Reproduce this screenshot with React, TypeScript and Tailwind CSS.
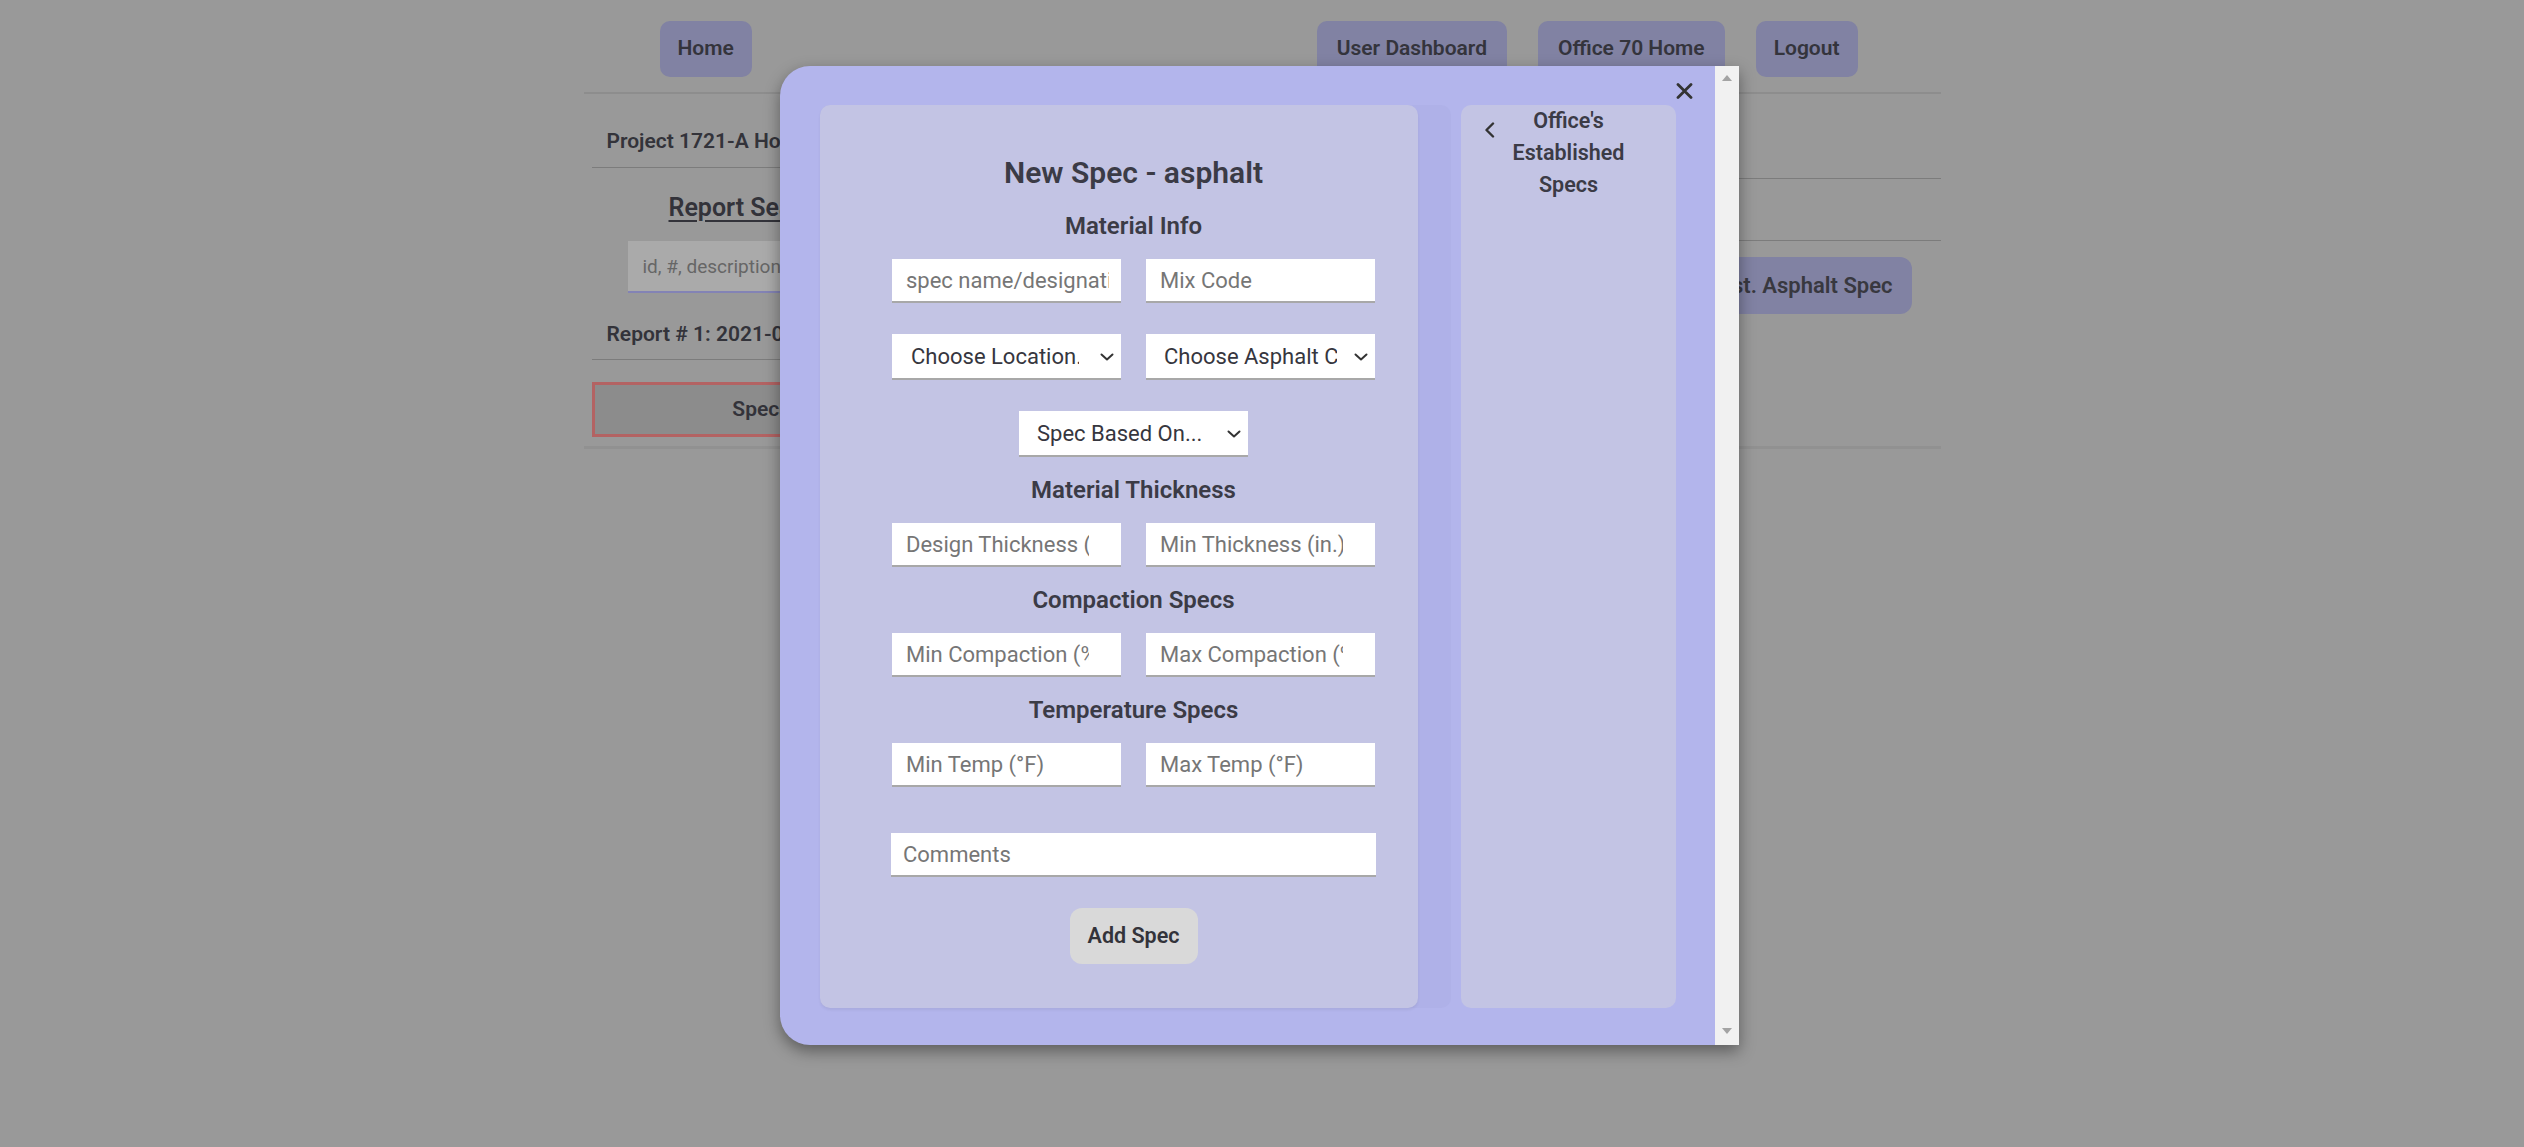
import React from "react";

const font = "font-['Roboto','Liberation_Sans',sans-serif]";

function NavButton({ label, wide = false }: { label: string; wide?: boolean }) {
  return (
    <button className={`h-[56px] ${wide ? "px-[20px]" : "px-[18px]"} rounded-[10px] bg-[#8182a3] text-[21px] font-semibold text-[#34343c]`}>
      {label}
    </button>
  );
}

function Chevron() {
  return (
    <svg width="14" height="8" viewBox="0 0 14 8" fill="none">
      <polyline points="1.5,1.5 7,6.5 12.5,1.5" stroke="#333" strokeWidth="2" strokeLinecap="round" strokeLinejoin="round" />
    </svg>
  );
}

function Field({ placeholder, numeric = false }: { placeholder: string; numeric?: boolean }) {
  return (
    <input
      placeholder={placeholder}
      className={`w-[229px] h-[44px] bg-white border-b-2 border-[#a8a8a8] pl-[14px] ${numeric ? "pr-[32px]" : "pr-[12px]"} text-[22px] text-[#333] placeholder:text-[#767676] outline-none`}
    />
  );
}

function Select({ label, narrow = false }: { label: string; narrow?: boolean }) {
  return (
    <div className="relative w-[229px] h-[46px]">
      <select
        className={`appearance-none w-full h-full bg-white border-b-2 border-[#a8a8a8] ${narrow ? "pl-[18px] pr-[38px]" : "pl-[19px] pr-[42px]"} text-[22px] text-[#36363e] outline-none`}
        defaultValue="x"
      >
        <option value="x">{label}</option>
      </select>
      <span className="pointer-events-none absolute right-[7px] top-[19px]">
        <Chevron />
      </span>
    </div>
  );
}

function Heading({ children }: { children: React.ReactNode }) {
  return <div className="h-[30px] leading-[30px] my-[18px] text-[24px] font-semibold text-[#3b3b46]">{children}</div>;
}

export default function App() {
  return (
    <div className={`relative min-h-screen w-full bg-[#999999] ${font}`}>
      {/* Background page */}
      <div className="mx-auto w-[1357px] h-[1147px]">
        <nav className="flex items-center justify-between pl-[76px] pr-[83px] pt-[21px] pb-[15px] border-b-[2px] border-[#8d8d8d]">
          <NavButton label="Home" />
          <div className="flex gap-[31px]">
            <NavButton label="User Dashboard" wide />
            <NavButton label="Office 70 Home" wide />
            <NavButton label="Logout" />
          </div>
        </nav>

        <div className="flex border-b-[3px] border-[#919191]">
          <div className="w-[408px] ml-[8px] pb-[9px]">
            <div className="pt-[33px] pb-[12px] pl-[15px] border-b border-[#7c7c7c] text-[21px] leading-[28px] font-semibold text-[#33333a] whitespace-nowrap">
              Project 1721-A Holiday Inn Express
            </div>
            <div className="mt-[24px] pl-[77px] h-[32px] leading-[32px] text-[25px] font-semibold text-[#33333a] underline underline-offset-[4px] whitespace-nowrap">
              Report Search Filters
            </div>
            <input
              placeholder="id, #, description, date"
              className="mt-[17px] ml-[36px] w-[336px] h-[52px] bg-[#aaaaaa] border-b-2 border-[#8383b5] px-[15px] text-[19px] placeholder:text-[#666666] outline-none"
            />
            <div className="mt-[27px] pb-[11px] pl-[15px] border-b border-[#7c7c7c] text-[21px] leading-[28px] font-semibold text-[#33333a] whitespace-nowrap">
              Report # 1: 2021-06-14
            </div>
            <button className="mt-[22px] w-full h-[55px] border-[3px] border-[#b36363] bg-[#8c8c8c] text-[21px] font-semibold text-[#33333a]">
              Specs Report
            </button>
          </div>
          <div className="flex-1 ml-[40px] flex flex-col">
            <div className="h-[85px] border-b border-[#7c7c7c]" />
            <div className="h-[62px] border-b border-[#7c7c7c]" />
            <button className="mt-[16px] self-end mr-[29px] h-[57px] px-[19px] rounded-[12px] bg-[#8182a3] text-[22px] font-semibold text-[#38383f]">
              Add Est. Asphalt Spec
            </button>
          </div>
        </div>
      </div>

      {/* Modal */}
      <div className="absolute left-[780px] top-[66px] w-[959px] h-[979px] flex rounded-l-[30px] bg-[#b3b5ec] shadow-[0_6px_16px_rgba(0,0,0,0.4)]">
        <div className="relative flex-1 flex gap-[10px] pl-[40px] pr-[39px] pt-[39px] pb-[37px]">
          <button className="absolute top-[17px] right-[22px]">
            <svg width="17" height="16" viewBox="0 0 17 16" fill="none">
              <path d="M2 1.5 L15 14.5 M15 1.5 L2 14.5" stroke="#333" strokeWidth="2.8" strokeLinecap="round" />
            </svg>
          </button>

          <div className="w-[631px] flex rounded-[10px] bg-[#afb1e8]">
            <div className="w-[598px] rounded-[10px] bg-[#c3c4e4] shadow-[0_2px_3px_rgba(0,0,0,0.06)] pl-[72px] pr-[43px] pt-[48px] flex flex-col items-center">
              <div className="h-[40px] leading-[40px] text-[30px] font-semibold text-[#3b3b46]">New Spec - asphalt</div>
              <Heading>Material Info</Heading>
              <div className="w-full flex justify-between">
                <Field placeholder="spec name/designation" />
                <Field placeholder="Mix Code" />
              </div>
              <div className="w-full flex justify-between mt-[31px]">
                <Select label="Choose Location..." />
                <Select label="Choose Asphalt Course" narrow />
              </div>
              <div className="mt-[31px]">
                <Select label="Spec Based On..." narrow />
              </div>
              <Heading>Material Thickness</Heading>
              <div className="w-full flex justify-between">
                <Field placeholder="Design Thickness (in.)" numeric />
                <Field placeholder="Min Thickness (in.)" numeric />
              </div>
              <Heading>Compaction Specs</Heading>
              <div className="w-full flex justify-between">
                <Field placeholder="Min Compaction (%)" numeric />
                <Field placeholder="Max Compaction (%)" numeric />
              </div>
              <Heading>Temperature Specs</Heading>
              <div className="w-full flex justify-between">
                <Field placeholder="Min Temp (°F)" numeric />
                <Field placeholder="Max Temp (°F)" numeric />
              </div>
              <input
                placeholder="Comments"
                className="mt-[46px] w-[485px] h-[44px] bg-white border-b-2 border-[#a8a8a8] px-[12px] text-[22px] placeholder:text-[#767676] outline-none"
              />
              <button className="mt-[31px] w-[128px] h-[56px] rounded-[12px] bg-[#d9d9d9] text-[21.5px] font-semibold text-[#33333a]">
                Add Spec
              </button>
            </div>
          </div>

          <div className="flex-1 rounded-[10px] bg-[#c3c4e4]">
            <div className="flex text-[21.5px] leading-[32px] font-semibold text-[#3b3b46]">
              <div className="w-[34px] pl-[23px] pt-[17px] shrink-0">
                <svg width="11" height="16" viewBox="0 0 11 16" fill="none">
                  <polyline points="9,1.5 2.5,8 9,14.5" stroke="#333" strokeWidth="2.4" strokeLinecap="round" strokeLinejoin="round" />
                </svg>
              </div>
              <div className="flex-1 text-center">
                <div>Office's</div>
                <div>Established</div>
                <div>Specs</div>
              </div>
              <div className="w-[34px] shrink-0" />
            </div>
          </div>
        </div>

        {/* scrollbar */}
        <div className="w-[24px] bg-[#f1f1f1] flex flex-col items-center justify-between pt-[9px] pb-[11px]">
          <svg width="10" height="6" viewBox="0 0 10 6">
            <polygon points="0,6 10,6 5,0" fill="#a3a3a3" />
          </svg>
          <svg width="10" height="6" viewBox="0 0 10 6">
            <polygon points="0,0 10,0 5,6" fill="#a3a3a3" />
          </svg>
        </div>
      </div>
    </div>
  );
}
